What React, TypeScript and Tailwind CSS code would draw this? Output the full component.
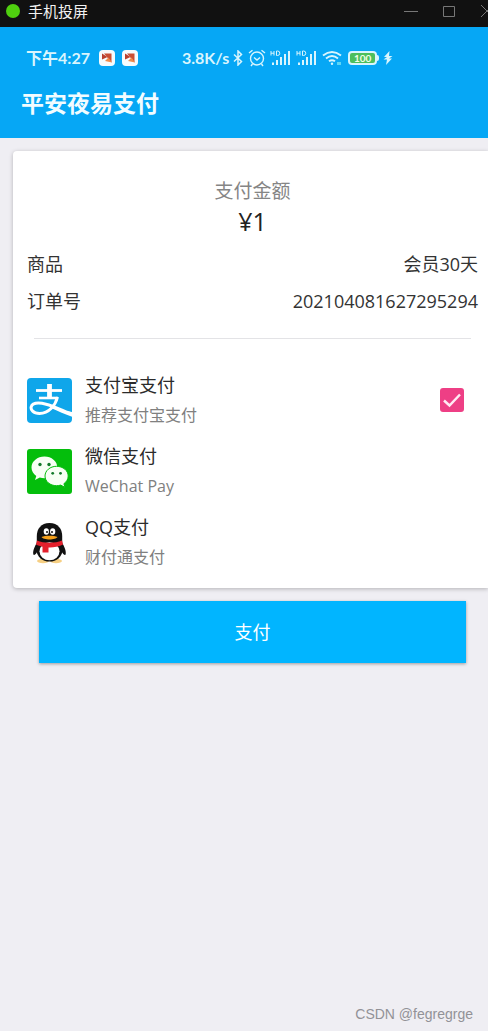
import { useState } from "react";

const ORDER = [
  { label: "商品", value: "会员30天" },
  { label: "订单号", value: "202104081627295294" },
];

const METHODS = [
  { id: "alipay", name: "支付宝支付",  hint: "推荐支付宝支付", icon: AlipayIcon },
  { id: "wechat", name: "微信支付",    hint: "WeChat Pay",     icon: WechatIcon },
  { id: "qq",     name: "QQ支付",      hint: "财付通支付",     icon: QQIcon     },
];

function AlipayIcon() {
  return (
    <svg viewBox="0 0 45 45" className="size-[45px]" aria-hidden="true">
      <rect width="45" height="45" rx="4" fill="#0fa6ea" />
      <g fill="none" stroke="#fff">
        <path d="M9 12.500H35" strokeWidth="2.800" />
        <path d="M22.500 6V19.500" strokeWidth="4.800" />
        <path d="M12 20H31" strokeWidth="2.600" />
        <path d="M30.500 19C28.500 27 22 35.500 12.500 35.500C6 35.500 3.500 31.500 4.200 28.800C5 25.600 9.500 24.500 15 25.200C24 26.500 33 32 45 36" strokeWidth="3" />
      </g>
      <path d="M27 29.200C33 31.500 39 33.200 45 34V38.800C38 36.500 31 33 25 30.600Z" fill="#fff" />
    </svg>
  );
}

function WechatIcon() {
  return (
    <svg viewBox="0 0 45 45" className="size-[45px]" aria-hidden="true">
      <rect width="45" height="45" rx="3" fill="#04be0c" />
      <path d="M17.500 7.500C10.500 7.500 4.500 12.200 4.500 18.500C4.500 22 6.400 25 9.300 27L8 31L12.800 28.600C14.300 29 15.900 29.300 17.500 29.300C24.500 29.300 30.300 24.500 30.300 18.500C30.300 12.200 24.500 7.500 17.500 7.500Z" fill="#f7fff5" />
      <path d="M29.500 17.300C23.200 17.300 18 21.600 18 27C18 32.500 23.200 36.700 29.500 36.700C31 36.700 32.400 36.500 33.700 36.100L38 38.400L36.900 34.700C39.500 32.900 41.200 30.200 41.200 27C41.200 21.600 36 17.300 29.500 17.300Z" fill="#f7fff5" stroke="#04be0c" strokeWidth="1" />
      <g fill="#137a2b">
        <circle cx="13" cy="15.500" r="1.700" />
        <circle cx="22" cy="15.500" r="1.700" />
        <circle cx="25.700" cy="24.300" r="1.400" />
        <circle cx="33.500" cy="24.300" r="1.400" />
      </g>
    </svg>
  );
}

function QQIcon() {
  return (
    <svg viewBox="0 0 45 45" className="size-[45px]" aria-hidden="true">
      <ellipse cx="16" cy="41" rx="6" ry="2.200" fill="#f6cf83" />
      <ellipse cx="29" cy="41" rx="6" ry="2.200" fill="#f6cf83" />
      <path d="M11.500 20C8.500 25 5.500 30 6.300 34.500C7.500 36 9.500 33.500 10.500 31L34.500 31C35.500 33.500 37.500 36 38.700 34.500C39.500 30 36.500 25 33.500 20Z" fill="#111" />
      <ellipse cx="22.500" cy="30" rx="13" ry="11.500" fill="#111" />
      <path d="M22.500 3C14 3 9.800 9 9.800 16V23H35.200V16C35.200 9 31 3 22.500 3Z" fill="#111" />
      <ellipse cx="22.500" cy="31.300" rx="10" ry="9" fill="#fff" />
      <ellipse cx="19.300" cy="11.500" rx="2.600" ry="3.300" fill="#fff" />
      <ellipse cx="25.700" cy="11.500" rx="2.600" ry="3.300" fill="#fff" />
      <circle cx="20" cy="12" r="1" fill="#111" />
      <circle cx="25" cy="12" r="1" fill="#111" />
      <path d="M14.500 17C18 15.300 27 15.300 30.500 17C29 20.300 16 20.300 14.500 17Z" fill="#f5a11c" />
      <path d="M10 20.500C17 23.500 28 23.500 35 20.500L36 24.500C31 27 26 27.700 21.500 27.500V32.500H15.500V26.700C13 26 11 25.500 9 24.500Z" fill="#e3202c" />
    </svg>
  );
}

function AppBadge() {
  return (
    <svg viewBox="0 0 16 16" className="size-4" aria-hidden="true">
      <rect width="16" height="16" rx="4" fill="#f6fbfd" />
      <path d="M3 3.500L8.500 7L3 9.500Z" fill="#b8402f" />
      <path d="M5 3.500H12.500V12.500Z" fill="#c94f35" />
      <path d="M6 11L9.500 7.500L13 12.500Z" fill="#f08a4b" />
    </svg>
  );
}

function Signal() {
  return (
    <svg viewBox="0 0 20 16" className="h-4 w-5" fill="none" stroke="#d9f5fd" aria-hidden="true">
      <path d="M1 1V5.500M4 1V5.500M1 3.200H4M6.500 1V5.500H7.500Q9.800 5.500 9.800 3.200Q9.800 1 7.500 1Z" strokeWidth="1" />
      <path d="M3 12.500V15M7 10V15M11 7V15M15 4V15M19 1V15" strokeWidth="2" />
    </svg>
  );
}

function StatusIcons() {
  return (
    <div className="flex items-center">
      <svg viewBox="0 0 12 16" className="h-4 w-3" fill="none" stroke="#d9f5fd" strokeWidth="1.500" aria-hidden="true">
        <path d="M2 4.500L9.500 11.500L6 15V1L9.500 4.500L2 11.500" />
      </svg>
      <svg viewBox="0 0 18 18" className="ml-1 size-[18px]" fill="none" stroke="#d9f5fd" strokeWidth="1.400" aria-hidden="true">
        <circle cx="9" cy="9.500" r="6.500" />
        <path d="M1 4L4.500 1.300M17 4L13.500 1.300M6 8.500L9 11L12 8.500M4.500 15L3 17M13.500 15L15 17" />
      </svg>
      <div className="ml-1 flex gap-[6px]">
        <Signal />
        <Signal />
      </div>
      <svg viewBox="0 0 20 16" className="ml-[6px] h-4 w-5" fill="none" stroke="#d9f5fd" strokeWidth="1.900" aria-hidden="true">
        <path d="M1 5.500Q10 -1.500 19 5.500M4 8.500Q10 3.500 16 8.500M7 11.300Q10 9 13 11.300" />
        <circle cx="10" cy="13.700" r="1.200" fill="#d9f5fd" stroke="none" />
        <path d="M15 13.500H19" strokeWidth="3" stroke="#5ed6f5" />
      </svg>
      <div className="ml-[6px] flex items-center">
        <span className="flex h-[14px] w-[29px] items-center justify-center rounded border-2 border-[#d9f5fd] bg-[#4cbf5d] text-[10px] leading-none font-bold text-[#f4ffe8]">
          100
        </span>
        <span className="h-[6px] w-[2px] rounded-r bg-[#d9f5fd]" />
      </div>
      <svg viewBox="0 0 10 14" className="ml-1 h-[14px] w-[10px]" fill="#d9f5fd" aria-hidden="true">
        <path d="M6.500 0L1 6H4L0.500 8.500H4L3 14L9 7.500H6L9.500 5H6Z" />
      </svg>
    </div>
  );
}

function WindowBar() {
  return (
    <div className="flex h-[27px] items-center overflow-hidden bg-[#111] pb-[6px] pl-[6px] text-[#f2f2f2]">
      <span className="size-[14px] rounded-full bg-[#4fd00f]" />
      <span className="ml-2 text-[15px] leading-5">手机投屏</span>
      <div className="-mr-[6px] ml-auto flex items-center gap-6">
        <button aria-label="最小化">
          <svg viewBox="0 0 14 14" className="size-[14px]" stroke="#777" fill="none"><path d="M0 7.500H14" /></svg>
        </button>
        <button aria-label="最大化">
          <svg viewBox="0 0 14 14" className="size-[14px]" stroke="#777" fill="none"><path d="M1.500 2.500H12.500V12.500H1.500Z" /></svg>
        </button>
        <button aria-label="关闭">
          <svg viewBox="0 0 14 14" className="size-[14px]" stroke="#777" fill="none"><path d="M1 1L13 13M13 1L1 13" /></svg>
        </button>
      </div>
    </div>
  );
}

export default function App() {
  const [method, setMethod] = useState("alipay");

  return (
    <div className="flex min-h-screen flex-col overflow-hidden bg-[#efeef3] font-['Open_Sans','Noto_Sans_CJK_SC',sans-serif] text-[#333]">
      <WindowBar />

      {/* Phone header */}
      <header className="bg-[#06a7f5] pt-5 pb-[19px] font-['Lato','Noto_Sans_CJK_SC',sans-serif]">
        <div className="flex h-[22px] items-center pl-[26px] text-[16px] leading-[22px] font-bold text-[#d9f5fd]">
          <span className="w-[73px] whitespace-nowrap">下午4:27</span>
          <div className="flex gap-[7px]">
            <AppBadge />
            <AppBadge />
          </div>
          <span className="ml-11 mr-[3px]">3.8K/s</span>
          <StatusIcons />
        </div>
        <h1 className="mt-[18px] pl-[21px] text-[23px] leading-8 font-bold text-[#f2fcff]">平安夜易支付</h1>
      </header>

      {/* Order card */}
      <main className="pt-[13px] pl-[13px]">
        <section className="rounded-l bg-white pt-7 pr-[10px] pb-4 pl-[14px] shadow-[0_1px_4px_rgba(0,0,0,0.25)]">
          <p className="text-center text-[19px] leading-6 text-[#858585]">支付金额</p>
          <p className="text-center text-[25px] leading-9 text-[#222]">¥1</p>

          <dl className="mt-[7px] text-[18px] leading-[37px]">
            {ORDER.map(o => (
              <div key={o.label} className="flex justify-between">
                <dt>{o.label}</dt>
                <dd>{o.value}</dd>
              </div>
            ))}
          </dl>

          <hr className="mx-[7px] mt-[18px] border-[#e3e3e6]" />

          <div className="mt-[31px] space-y-[11px]">
            {METHODS.map(m => (
              <label key={m.id} htmlFor={m.id} className="flex cursor-pointer items-center">
                <m.icon />
                <span className="ml-[13px] flex-1">
                  <span className="block text-[18px] leading-[30px] text-[#2b2b2b]">{m.name}</span>
                  <span className="block text-[16px] leading-[30px] text-[#808080]">{m.hint}</span>
                </span>
                <span className="mr-[14px] grid place-items-center">
                  <input
                    id={m.id}
                    type="checkbox"
                    checked={method === m.id}
                    onChange={() => setMethod(m.id)}
                    className="col-start-1 row-start-1 size-6 appearance-none rounded-[3px] checked:bg-[#ee3f85]"
                  />
                  {method === m.id && (
                    <svg viewBox="0 0 24 24" className="pointer-events-none col-start-1 row-start-1 size-6" fill="none" stroke="#ffeaf3" strokeWidth="2.500" aria-hidden="true">
                      <path d="M4 12.500L9.500 17.500L20 6.500" />
                    </svg>
                  )}
                </span>
              </label>
            ))}
          </div>
        </section>

        <div className="mt-[13px] mr-[22px] ml-[26px]">
          <button className="h-[62px] w-full bg-[#01b5ff] text-[18px] text-white shadow-[0_1px_3px_rgba(0,0,0,0.35)]">
            支付
          </button>
        </div>
      </main>

      <footer className="mt-auto pr-[15px] pb-[7px] text-right font-['Liberation_Sans',sans-serif] text-[14px] leading-5 text-[#929297]">
        CSDN @fegregrge
      </footer>
    </div>
  );
}
